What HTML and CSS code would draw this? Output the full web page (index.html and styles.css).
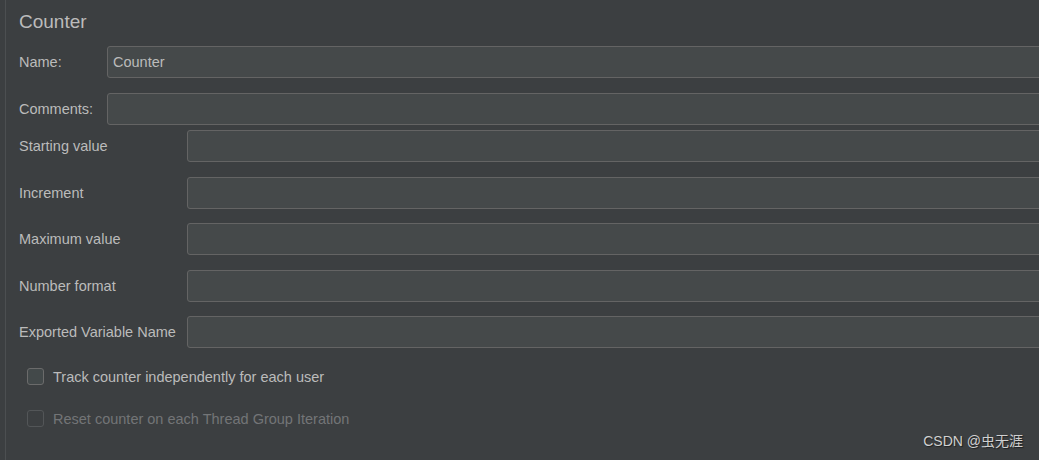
FILE: index.html
```html
<!DOCTYPE html>
<html>
<head>
<meta charset="utf-8">
<link rel="stylesheet" href="styles.css">
</head>
<body>
<div class="app">
  <div class="rail"></div>
  <div class="content">
    <div class="title">Counter</div>
    <div class="form name-form">
      <label class="lbl">Name:</label>
      <div class="field">Counter</div>
      <label class="lbl">Comments:</label>
      <div class="field"></div>
    </div>
    <div class="form config-form">
      <label class="lbl">Starting value</label>
      <div class="field"></div>
      <label class="lbl">Increment</label>
      <div class="field"></div>
      <label class="lbl">Maximum value</label>
      <div class="field"></div>
      <label class="lbl">Number format</label>
      <div class="field"></div>
      <label class="lbl">Exported Variable Name</label>
      <div class="field"></div>
    </div>
    <div class="checks">
      <div class="check">
        <span class="box"></span>
        <span class="check-text">Track counter independently for each user</span>
      </div>
      <div class="check disabled">
        <span class="box"></span>
        <span class="check-text">Reset counter on each Thread Group Iteration</span>
      </div>
    </div>
  </div>
</div>
<div class="watermark">CSDN @虫无涯</div>
</body>
</html>
```

FILE: styles.css
```css
html, body {
  margin: 0;
  padding: 0;
}
body {
  width: 1039px;
  height: 460px;
  overflow: hidden;
  background: #3c3f41;
  font-family: "Liberation Sans", Arial, sans-serif;
  color: #bbbbbb;
  position: relative;
}
.app {
  display: flex;
  height: 460px;
}
.rail {
  width: 5px;
  flex: none;
  border-right: 1px solid #4c4f51;
}
.content {
  flex: 1;
  padding-left: 13px;
  margin-right: -12px;
}
.title {
  margin-top: 10px;
  font-size: 19px;
  line-height: 24px;
  height: 24px;
}
.form {
  display: grid;
  align-items: center;
}
.name-form {
  margin-top: 12px;
  grid-template-columns: 88px 1fr;
  row-gap: 15px;
}
.config-form {
  margin-top: 5px;
  grid-template-columns: 168px 1fr;
  row-gap: 14.5px;
}
.lbl {
  font-size: 14.5px;
  line-height: 18px;
  white-space: nowrap;
}
.field {
  height: 30px;
  box-sizing: content-box;
  border: 1px solid #646464;
  border-radius: 3px;
  background: #45494a;
  font-size: 14.5px;
  line-height: 30px;
  padding-left: 5px;
  color: #bbbbbb;
}
.checks {
  margin-top: 7.5px;
  padding-left: 8px;
}
.check {
  height: 42px;
  display: flex;
  align-items: center;
}
.box {
  width: 15px;
  height: 15px;
  border: 1px solid #6b6b6b;
  border-radius: 3px;
  background: #43494a;
  flex: none;
}
.check-text {
  margin-left: 9px;
  font-size: 14.5px;
  line-height: 18px;
}
.check.disabled .box {
  border-color: #535658;
  background: #3c3f41;
}
.check.disabled .check-text {
  color: #737577;
}
.watermark {
  position: absolute;
  right: 16px;
  bottom: 10px;
  font-family: "Liberation Sans", "Noto Sans CJK SC", sans-serif;
  font-size: 14px;
  line-height: 18px;
  color: #d0d0d0;
  text-shadow: 1px 1px 1px rgba(0,0,0,0.5);
}
```
